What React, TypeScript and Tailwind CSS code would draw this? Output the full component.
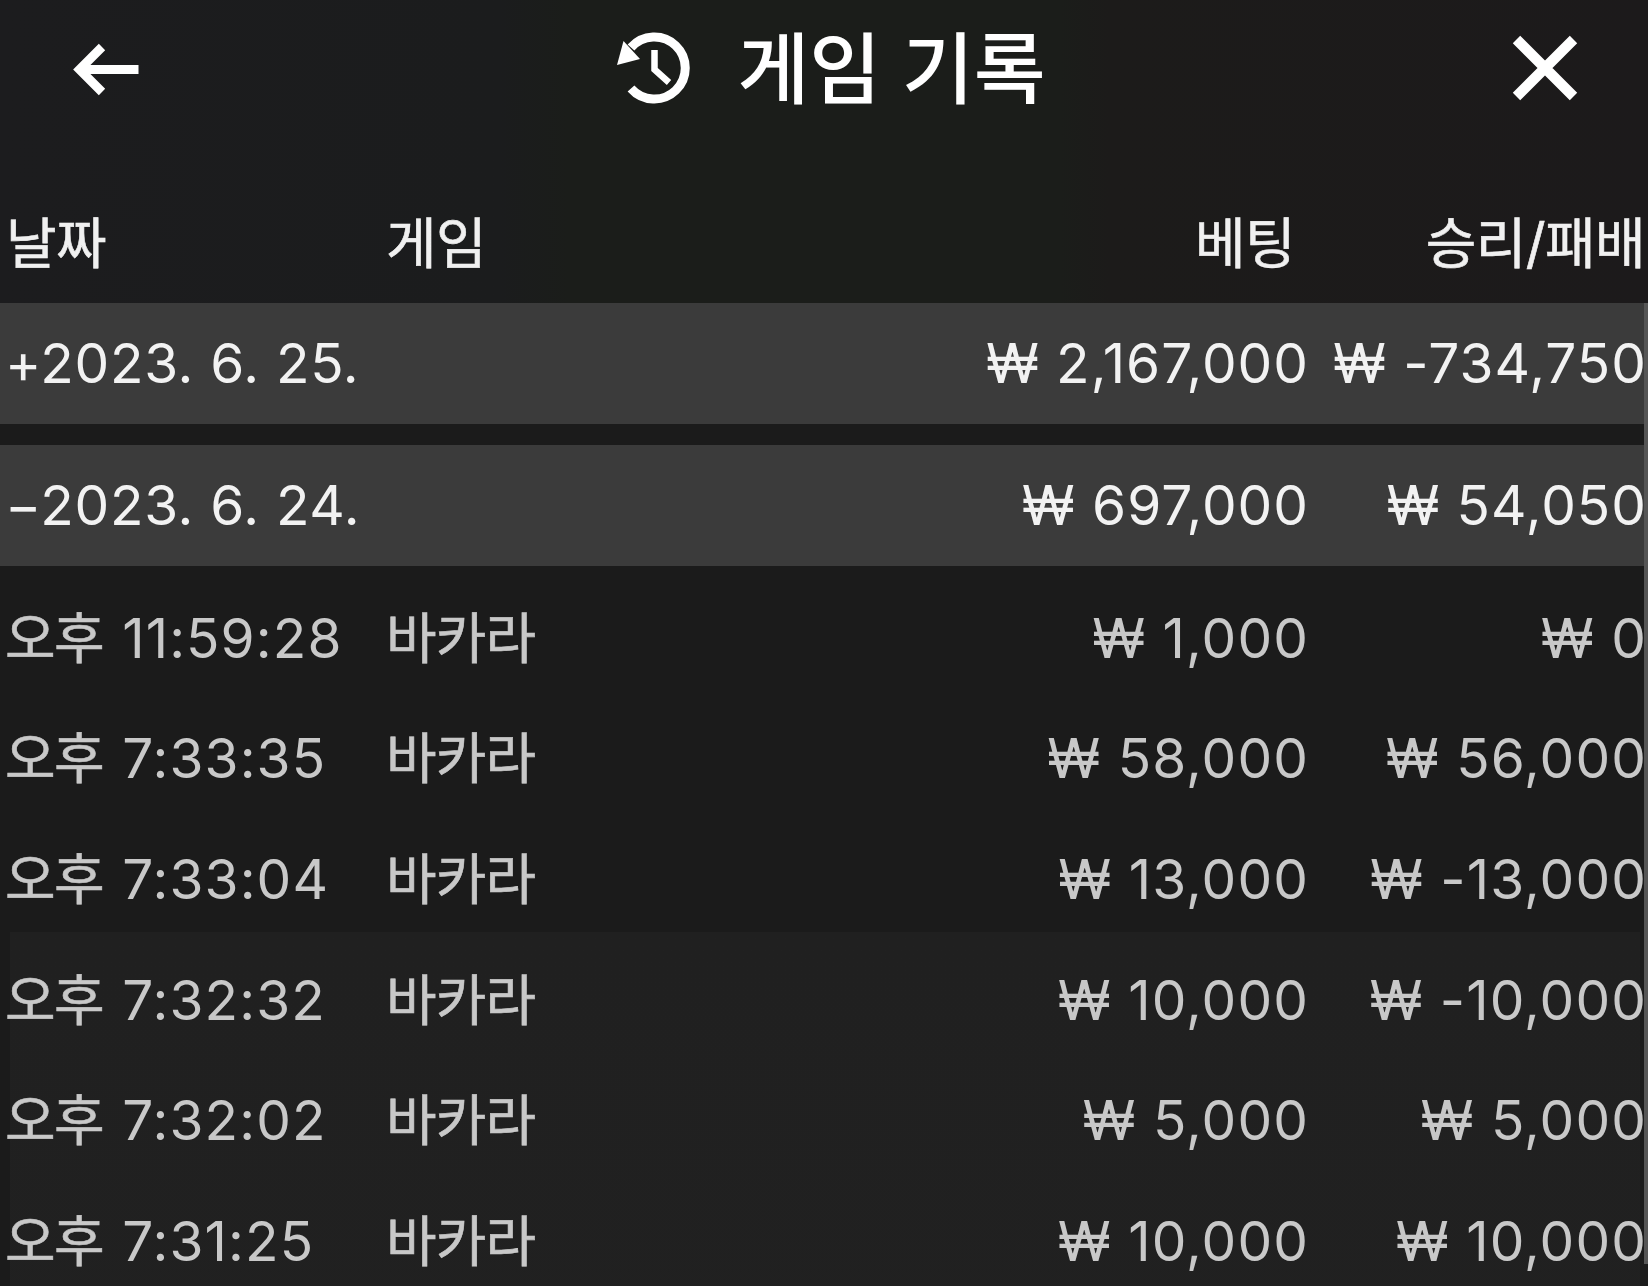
interface Bet {
  time: string;
  game: string;
  bet: string;
  result: string;
}

interface Day {
  date: string;
  open: boolean;
  bet: string;
  result: string;
  bets: Bet[];
}

const DAYS: Day[] = [
  { date: '2023. 6. 25.', open: false, bet: '2,167,000', result: '-734,750', bets: [] },
  {
    date: '2023. 6. 24.',
    open: true,
    bet: '697,000',
    result: '54,050',
    bets: [
      { time: '11:59:28', game: '바카라', bet: '1,000', result: '0' },
      { time: '7:33:35', game: '바카라', bet: '58,000', result: '56,000' },
      { time: '7:33:04', game: '바카라', bet: '13,000', result: '-13,000' },
      { time: '7:32:32', game: '바카라', bet: '10,000', result: '-10,000' },
      { time: '7:32:02', game: '바카라', bet: '5,000', result: '5,000' },
      { time: '7:31:25', game: '바카라', bet: '10,000', result: '10,000' },
    ],
  },
];

const COLS = 'grid shrink-0 grid-cols-[386px_500px_423px_338px] items-center whitespace-nowrap';

function BackIcon() {
  return (
    <svg width="70" height="60" viewBox="0 0 70 60" fill="none" stroke="currentColor" strokeWidth="9">
      <path d="M68.500 30.500H10M32 8L9.500 30.500L32 53" />
    </svg>
  );
}

function HistoryIcon() {
  return (
    <svg width="78" height="76" viewBox="0 0 78 76" fill="none" stroke="currentColor">
      <path d="M16 57.500A31 31 0 1 0 16 16.500" strokeWidth="9" />
      <path d="M8.500 10L2 34L25 28Z" fill="currentColor" stroke="none" />
      <path d="M39.500 19V38.500L54 51.500" strokeWidth="6.500" />
    </svg>
  );
}

function CloseIcon() {
  return (
    <svg width="66" height="66" viewBox="0 0 66 66" fill="none" stroke="currentColor" strokeWidth="10.500">
      <path d="M4.500 4.500L61.500 61.500M61.500 4.500L4.500 61.500" />
    </svg>
  );
}

export default function App() {
  return (
    <div className="relative flex h-[1286px] w-[1648px] flex-col overflow-hidden bg-[#1b1b1b] bg-[linear-gradient(90deg,#1c1c1e_0,#1b1c1d_500px,#1b1d1a_570px,#1b1d1a_1060px,#1c1b1a_1110px,#1c1a1b_100%)] bg-[length:100%_303px] bg-no-repeat font-['Inter','Noto_Sans_CJK_KR',sans-serif] text-[55px] leading-[60px] text-[#c8c8c8]">
      {/* Title bar */}
      <header className="flex h-[138px] shrink-0 items-center justify-between pl-[70px] pr-[70px] text-white">
        <button aria-label="뒤로" className="w-[70px]">
          <BackIcon />
        </button>
        <div className="flex items-center gap-[45px] pl-[8px]">
          <HistoryIcon />
          <h1 className="pt-[2px] text-[78px] font-medium leading-[90px]">게임 기록</h1>
        </div>
        <button aria-label="닫기" className="pb-[2px]">
          <CloseIcon />
        </button>
      </header>

      {/* Column names */}
      <div className={`${COLS} h-[165px] pt-[45px] tracking-[-0.6px] text-[#f0f0f0] [-webkit-text-stroke:0.6px]`}>
        <div className="pl-[6px]">날짜</div>
        <div>게임</div>
        <div className="pr-[14px] text-right">베팅</div>
        <div className="pr-[2px] text-right">승리/패배</div>
      </div>

      <main className="flex shrink-0 flex-col gap-[21.500px]">
        {DAYS.map(day => (
          <section key={day.date}>
            <div className={`${COLS} h-[120.500px] bg-[#3b3b3b] tracking-[1px] text-[#f2f2f2]`}>
              <div className="pl-[5px] tracking-[0.7px]">{day.open ? '−' : '+'}{day.date}</div>
              <div />
              <div className="text-right">₩ {day.bet}</div>
              <div className="text-right">₩ {day.result}</div>
            </div>
            {day.open && (
              <div className="bg-[linear-gradient(#202020,#212121)] bg-[length:1630px_100%] bg-[position:10px_366px] bg-no-repeat pt-[12px]">
                {day.bets.map(b => (
                  <div key={b.time} className={`${COLS} h-[120.600px] tracking-[1.100px]`}>
                    <div className="flex gap-[19px] pl-[5px]">
                      <span className="tracking-[-1.500px] [-webkit-text-stroke:0.6px]">오후</span>
                      <span>{b.time}</span>
                    </div>
                    <div className="tracking-[-0.8px] [-webkit-text-stroke:0.6px]">{b.game}</div>
                    <div className="text-right">₩ {b.bet}</div>
                    <div className="text-right">₩ {b.result}</div>
                  </div>
                ))}
              </div>
            )}
          </section>
        ))}
      </main>

      {/* Scroll thumb */}
      <div className="absolute right-0 top-[303px] h-[961px] w-[4px] bg-[#555555]" />
    </div>
  );
}
